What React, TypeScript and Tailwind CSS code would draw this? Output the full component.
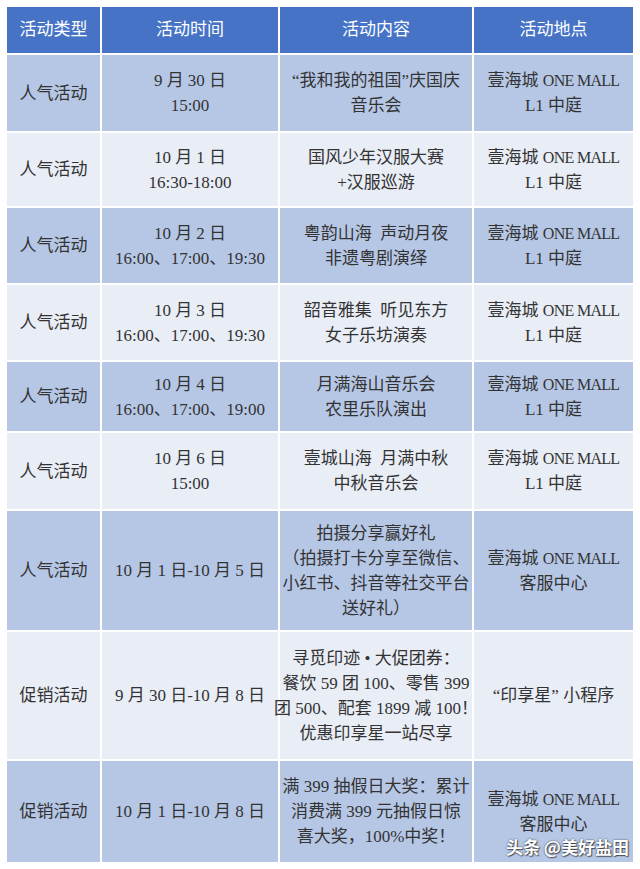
import React from "react";

const mall = (
  <>
    壹海城 <span className="text-[16px] tracking-[-0.7px]">ONE MALL</span>
  </>
);

const rows: { type: string; time: string[]; content: string[]; place: React.ReactNode[] }[] = [
  {
    type: "人气活动",
    time: ["9 月 30 日", "15:00"],
    content: ["“我和我的祖国”庆国庆", "音乐会"],
    place: [mall, "L1 中庭"],
  },
  {
    type: "人气活动",
    time: ["10 月 1 日", "16:30-18:00"],
    content: ["国风少年汉服大赛", "+汉服巡游"],
    place: [mall, "L1 中庭"],
  },
  {
    type: "人气活动",
    time: ["10 月 2 日", "16:00、17:00、19:30"],
    content: ["粤韵山海  声动月夜", "非遗粤剧演绎"],
    place: [mall, "L1 中庭"],
  },
  {
    type: "人气活动",
    time: ["10 月 3 日", "16:00、17:00、19:30"],
    content: ["韶音雅集  听见东方", "女子乐坊演奏"],
    place: [mall, "L1 中庭"],
  },
  {
    type: "人气活动",
    time: ["10 月 4 日", "16:00、17:00、19:00"],
    content: ["月满海山音乐会", "农里乐队演出"],
    place: [mall, "L1 中庭"],
  },
  {
    type: "人气活动",
    time: ["10 月 6 日", "15:00"],
    content: ["壹城山海  月满中秋", "中秋音乐会"],
    place: [mall, "L1 中庭"],
  },
  {
    type: "人气活动",
    time: ["10 月 1 日-10 月 5 日"],
    content: ["拍摄分享赢好礼", "（拍摄打卡分享至微信、", "小红书、抖音等社交平台", "送好礼）"],
    place: [mall, "客服中心"],
  },
  {
    type: "促销活动",
    time: ["9 月 30 日-10 月 8 日"],
    content: ["寻觅印迹 • 大促团券：", "餐饮 59 团 100、零售 399", "团 500、配套 1899 减 100！", "优惠印享星一站尽享"],
    place: ["“印享星” 小程序"],
  },
  {
    type: "促销活动",
    time: ["10 月 1 日-10 月 8 日"],
    content: ["满 399 抽假日大奖：累计", "消费满 399 元抽假日惊", "喜大奖，100%中奖！"],
    place: [mall, "客服中心"],
  },
];

const font = {
  fontFamily: '"Liberation Serif", "Noto Sans CJK SC", serif',
};

const Cell = ({ lines, bg }: { lines: React.ReactNode[]; bg: string }) => (
  <div className={`${bg} flex flex-col items-center justify-center text-center text-[17px] leading-[25px] text-[#333333] whitespace-pre`}>
    {lines.map((l, i) => (
      <div key={i}>{l}</div>
    ))}
  </div>
);

export default function App() {
  const headers = ["活动类型", "活动时间", "活动内容", "活动地点"];
  return (
    <div className="relative w-[640px] h-[869px] bg-white pt-[7px] pl-[7px] overflow-hidden" style={font}>
      <div className="grid grid-cols-[93px_176px_192px_159px] grid-rows-[46px_76px_73px_75px_75px_69px_76px_119px_127px_101px] gap-[2px] bg-white w-[626px]">
        {headers.map((h) => (
          <div key={h} className="bg-[#4673c6] flex items-center justify-center text-white text-[17px]">
            {h}
          </div>
        ))}
        {rows.map((r, i) => {
          const bg = i % 2 === 0 ? "bg-[#b6c7e6]" : "bg-[#e9edf6]";
          return (
            <React.Fragment key={i}>
              <Cell lines={[r.type]} bg={bg} />
              <Cell lines={r.time} bg={bg} />
              <Cell lines={r.content} bg={bg} />
              <Cell lines={r.place} bg={bg} />
            </React.Fragment>
          );
        })}
      </div>
      <div
        className="absolute left-[506px] top-[834px] text-white text-[17px] font-bold"
        style={{ fontFamily: '"Noto Sans CJK SC", sans-serif', textShadow: "0 0 2px rgba(0,0,0,0.7), 1px 1px 1px rgba(0,0,0,0.5)" }}
      >
        头条 @美好盐田
      </div>
    </div>
  );
}
